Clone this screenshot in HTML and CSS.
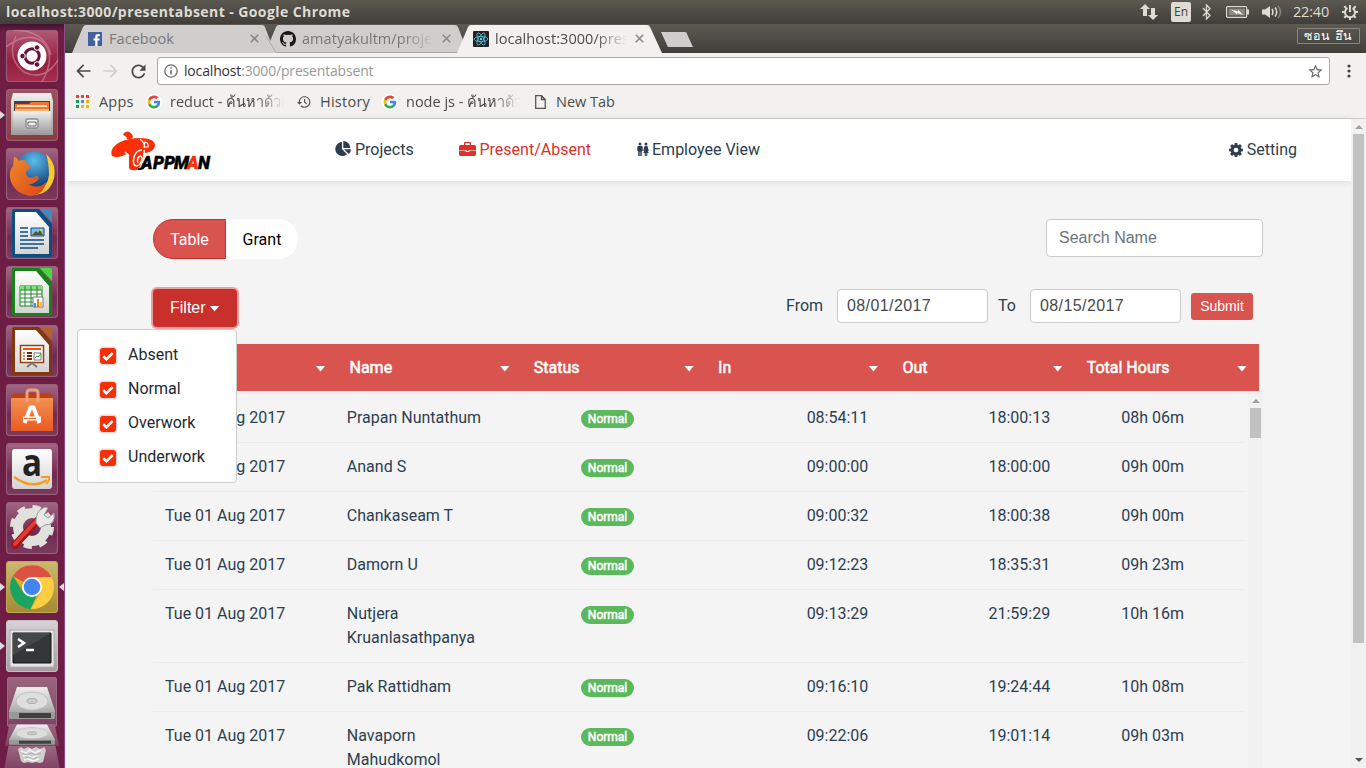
FILE: index.html
```html
<!DOCTYPE html>
<html lang="en">
<head>
<meta charset="utf-8">
<title>localhost:3000/presentabsent</title>
<link rel="stylesheet" href="styles.css">
</head>
<body>
<svg width="0" height="0" class="defs">
  <defs>
    <linearGradient id="steel" x1="0" y1="0" x2="0" y2="1"><stop offset="0" stop-color="#f0f0f0"/><stop offset="1" stop-color="#989898"/></linearGradient>
    <linearGradient id="paper" x1="0" y1="0" x2="0" y2="1"><stop offset="0" stop-color="#fff"/><stop offset="1" stop-color="#d4d4d4"/></linearGradient>
    <linearGradient id="bag" x1="0" y1="0" x2="0" y2="1"><stop offset="0" stop-color="#f39052"/><stop offset="1" stop-color="#ea5b20"/></linearGradient>
    <linearGradient id="fox" x1="0" y1="0" x2="1" y2="1"><stop offset="0" stop-color="#f08a2c"/><stop offset="1" stop-color="#dc4414"/></linearGradient>
    <radialGradient id="globe" cx=".5" cy=".25" r=".7"><stop offset="0" stop-color="#5ac0ea"/><stop offset="1" stop-color="#173f80"/></radialGradient>
    <symbol id="google" viewBox="0 0 24 24">
      <path fill="#4285f4" d="M22.56 12.25c0-.78-.07-1.53-.2-2.25H12v4.26h5.92c-.26 1.37-1.04 2.53-2.21 3.31v2.77h3.57c2.08-1.92 3.28-4.74 3.28-8.09z"/>
      <path fill="#34a853" d="M12 23c2.97 0 5.46-.98 7.28-2.66l-3.57-2.77c-.98.66-2.23 1.06-3.71 1.06-2.86 0-5.29-1.93-6.16-4.53H2.18v2.84C3.99 20.53 7.7 23 12 23z"/>
      <path fill="#fbbc05" d="M5.84 14.09c-.22-.66-.35-1.36-.35-2.09s.13-1.43.35-2.09V7.07H2.18C1.43 8.55 1 10.22 1 12s.43 3.45 1.18 4.93l2.85-2.22.81-.62z"/>
      <path fill="#ea4335" d="M12 5.38c1.62 0 3.06.56 4.21 1.64l3.15-3.15C17.45 2.09 14.97 1 12 1 7.7 1 3.99 3.47 2.18 7.07l3.66 2.84c.87-2.6 3.3-4.53 6.16-4.53z"/>
    </symbol>
    <symbol id="close" viewBox="0 0 9 9"><path d="M.8.8l7.4 7.4M8.2.8L.8 8.2" stroke="currentColor" stroke-width="1.6" fill="none"/></symbol>
    <symbol id="check" viewBox="0 0 12 10"><path d="M1.2 5.2l3.2 3L10.6 2" stroke="#fff" stroke-width="2.6" fill="none"/></symbol>
    <symbol id="drive" viewBox="0 0 46 34">
      <path d="M8 1h30l8 24v7q0 1-1 1H1q-1 0-1-1v-7z" fill="url(#steel)"/>
      <path d="M0 26h46v6q0 1-1 1H1q-1 0-1-1z" fill="#999"/><path d="M10 27h32v5H10z" fill="#3f3f3f"/>
      <ellipse cx="23" cy="15" rx="16" ry="9" fill="#dedede" stroke="#c0c0c0"/><ellipse cx="23" cy="15" rx="5" ry="2.5" fill="#ccc" stroke="#aaa"/>
    </symbol>
  </defs>
</svg>

<div class="desktop">
  <header class="panel">
    <div class="panel-title">localhost:3000/presentabsent - Google Chrome</div>
    <div class="indicators">
      <svg width="18" height="16" viewBox="0 0 18 16" fill="#dfdbd2"><path d="M5 0l5 5H7v7H3V5H0zM13 16l-5-5h3V4h4v7h3z"/></svg>
      <span class="lang">En</span>
      <svg class="bt" width="10" height="16" viewBox="0 0 10 16"><path d="M1 4l7 7.500-3.500 3.500V1L8 4.500 1 12" fill="none" stroke="#dfdbd2" stroke-width="1.300"/></svg>
      <svg class="battery" width="24" height="12" viewBox="0 0 24 12"><rect x=".6" y=".6" width="20" height="10.800" rx="1" fill="#4a4943" stroke="#dfdbd2" stroke-width="1.200"/><path d="M2.500 2.500h16.500v7H2.500z" fill="#8c897f"/><path d="M22 3.500v5" stroke="#dfdbd2" stroke-width="2"/><path d="M5 3.500l7 2 0-2 5 5.500-6-2v1.500z" fill="#f4f1ea"/></svg>
      <svg class="sound" width="20" height="16" viewBox="0 0 20 16"><path d="M0 5.500h3L8 2v12l-5-3.500H0z" fill="#dfdbd2"/><path d="M10 5q2 3 0 6M13 3.500q3.500 4.500 0 9" fill="none" stroke="#dfdbd2" stroke-width="1.500"/><path d="M16 2q5 6 0 12" fill="none" stroke="#88857c" stroke-width="1.500"/></svg>
      <span class="clock">22:40</span>
      <svg class="power" width="16" height="16" viewBox="0 0 16 16" fill="none" stroke="#dfdbd2"><path d="M5.500 4a5 5 0 1 0 5 0" stroke-width="2"/><path d="M8 1v7" stroke-width="2"/><path d="M0 8h3M13 8h3M2.300 2.300l2 2M13.700 2.300l-2 2M2.300 13.700l2-2M13.700 13.700l-2-2M8 13v3" stroke-width="2"/></svg>
    </div>
  </header>

  <div class="workspace">
    <nav class="launcher">
      <div class="tile dash"><svg viewBox="0 0 52 52"><path d="M0 17Q22 0 38 13 50 27 36 52M52 30Q38 52 18 42 0 28 10 6M8 0Q38 0 45 25" fill="none" stroke="#df93a6" stroke-opacity=".55" stroke-width="1.500"/><circle cx="26" cy="26" r="14.500" fill="#fff"/><circle cx="26" cy="26" r="7.200" fill="none" stroke="#6b1234" stroke-width="3"/><g fill="#6b1234" stroke="#fff"><circle cx="16.500" cy="26" r="2.800"/><circle cx="31" cy="17.500" r="2.800"/><circle cx="31" cy="34.500" r="2.800"/></g></svg></div>
      <div class="tile files running"><svg viewBox="0 0 52 52"><path d="M7 4h38l2 8v34H5V12z" fill="url(#steel)"/><path d="M8 12h36v11H8z" fill="#444"/><path d="M9 15h14l2-2h18v9H9z" fill="#ef762c"/><path d="M11 17h30" stroke="#fff" stroke-width="1.500"/><path d="M9 21h34" stroke="#f8b36f" stroke-width="2"/><path d="M7 22h38v24H7z" fill="url(#steel)"/><rect x="20" y="30" width="12" height="9" rx="2" fill="#f2f2f2" stroke="#8f8f8f" stroke-width="1.500"/><path d="M22 33h8v4h-8z" fill="#eee" stroke="#666"/></svg></div>
      <div class="tile"><svg viewBox="0 0 52 52"><circle cx="28" cy="22" r="18.500" fill="url(#globe)"/><path d="M40 6q11 10 8 24-4 16-20 17 14-8 15-20 0-12-3-21z" fill="#f7c92f"/><path d="M8 9q3 0 5 4 4-2 7 0 0 4 5 4-2 5-5 6-1 3 2 6 5 2 8-1 4 0 2 4-5 5-10 4 10 6 18-2-3 14-16 14Q7 45 4 30q-1-7 3-12z" fill="url(#fox)"/></svg></div>
      <div class="tile"><svg viewBox="0 0 52 52"><path d="M8 2h25l13 15v31q0 2-2 2H8q-2 0-2-2V4q0-2 2-2z" fill="#0b4f82"/><path d="M34 2h10q2 0 2 2v11z" fill="#3d8dbc"/><path d="M9 5h21l13 15v27H9z" fill="url(#paper)"/><path d="M14 21h8M14 25h8M14 29h8M14 33h24M14 37h24M14 41h18" stroke="#0b4f82" stroke-width="1.700"/><path d="M25 21h13v8H25z" fill="#83bedb" stroke="#0b4f82"/><path d="M26 28l4-4 2 2 2-3 3 5z" fill="#4c5440"/><circle cx="35" cy="23" r="1" fill="#fff200"/></svg></div>
      <div class="tile"><svg viewBox="0 0 52 52"><path d="M8 2h25l13 15v31q0 2-2 2H8q-2 0-2-2V4q0-2 2-2z" fill="#158317"/><path d="M34 2h10q2 0 2 2v11z" fill="#4bd642"/><path d="M9 5h21l13 15v27H9z" fill="url(#paper)"/><path d="M14 20h22v20H14z" fill="#fff" stroke="#158317"/><path d="M14 20h22v4H14z" fill="#84df7d"/><path d="M14 24h22M14 28h22M14 32h22M14 36h22M19 20v20M25 20v20M31 20v20" stroke="#218825"/><path d="M27 31h10v10H27z" fill="#fff" stroke="#777"/><path d="M29 37v4" stroke="#20a4da" stroke-width="2"/><path d="M32 33v8" stroke="#ed7625" stroke-width="2"/><path d="M35 36v5" stroke="#f2c532" stroke-width="2"/></svg></div>
      <div class="tile"><svg viewBox="0 0 52 52"><path d="M8 2h25l13 15v31q0 2-2 2H8q-2 0-2-2V4q0-2 2-2z" fill="#84370c"/><path d="M34 2h10q2 0 2 2v11z" fill="#b76225"/><path d="M9 5h21l13 15v27H9z" fill="url(#paper)"/><path d="M14.500 20.500h23v17h-23z" fill="#fffaf4" stroke="#984011" stroke-width="1.500"/><path d="M17 24h18" stroke="#d85c25" stroke-width="2"/><path d="M17 28h2M17 31h2M17 34h2" stroke="#e78662" stroke-width="2"/><path d="M21 28h5M21 31h5M21 34h5" stroke="#662b12" stroke-width="2"/><path d="M28 28h7v7h-7z" fill="#fff" stroke="#777"/><path d="M29 33l2-2 1 1 3-3" fill="none" stroke="#279e37"/><path d="M26 38l-5 4M26 38l5 4" stroke="#777" stroke-width="2"/></svg></div>
      <div class="tile"><svg viewBox="0 0 52 52"><path d="M5 11l3-2h36l3 2v5H5z" fill="#b94316"/><path d="M5 14h42v33H5z" fill="url(#bag)"/><path d="M21 18V9q0-3 3-3h5q3 0 3 3v9" fill="none" stroke="#f0a179" stroke-width="3"/><path d="M18.500 39L24.500 23.500h3L33.500 39M17 34.500h18" fill="none" stroke="#fff" stroke-width="4"/><path d="M18 34.500h12" stroke="#ed6c32"/></svg></div>
      <div class="tile"><svg viewBox="0 0 52 52"><rect x="6" y="6" width="40" height="40" rx="3" fill="url(#paper)"/><text x="16" y="33" class="a-mark" textLength="20" lengthAdjust="spacingAndGlyphs">a</text><path d="M8 34q18 13 33 3" fill="none" stroke="#f49b20" stroke-width="2.500"/><path d="M35 34h8q1 4-3 7" fill="none" stroke="#f49b20" stroke-width="1.800"/></svg></div>
      <div class="tile"><svg viewBox="0 0 52 52"><circle cx="26" cy="25" r="14" fill="none" stroke="#e0e0dd" stroke-width="10"/><circle cx="26" cy="25" r="19.500" fill="none" stroke="#e0e0dd" stroke-width="5" stroke-dasharray="8 7.300"/><path d="M9 43L32 18" stroke="#a71313" stroke-width="7.500" stroke-linecap="round"/><path d="M9 42L31 18" stroke="#df3d36" stroke-width="4" stroke-linecap="round"/><path d="M30 21q-1-12 9-16l3 1-4 7 4 3 6-5q2 12-9 12l-5 3z" fill="#e8e8e8" stroke="#999"/></svg></div>
      <div class="tile chrome running focused"><svg viewBox="0 0 52 52"><circle cx="26" cy="26" r="22" fill="#e5ae1d"/><path d="M26 26L7 15a22 22 0 0 1 38.500 1z" fill="#dd5144"/><path d="M26 16h19.500A22 22 0 0 1 25 48l10-17z" fill="#ffcd41"/><path d="M7 15l11 17 13 2-6.500 14A22 22 0 0 1 7 15z" fill="#1da361"/><circle cx="26" cy="26" r="10" fill="#fff"/><circle cx="26" cy="26" r="8.300" fill="#4285ef"/></svg></div>
      <div class="tile term running"><svg viewBox="0 0 52 52"><path d="M4 10h44v37H4z" fill="#e6e6e6" stroke="#aaa"/><path d="M7 13h38v30H7z" fill="#343737" stroke="#151515"/><path d="M7 13h38L7 35z" fill="#454848"/><path d="M12 19l6 4-6 4M20 30h8" fill="none" stroke="#fff" stroke-width="2.500"/></svg></div>
      <div class="stack">
        <div class="fold f1"><svg><use href="#drive"/></svg></div>
        <div class="fold f2"><svg preserveAspectRatio="none" viewBox="0 0 46 34"><use href="#drive" width="46" height="34"/></svg></div>
        <div class="fold f3"><svg viewBox="0 0 30 18"><path d="M1 3l3-2 3 2 4-2 4 2 4-2 4 2 4-2 2 3-3 12 -3 1-4-1-4 1-4-1-4 1-3-2z" fill="#cfcfcd"/><path d="M4 5l5 2 4-3 5 3 6-3M6 10l5-1 4 3 6-3M7 14l4-1 5 2 6-2" fill="none" stroke="#f4f4f4" stroke-width="1.500"/><path d="M5 7l5 2 5-2 4 2 5-2M8 12l4-1 4 2 4-2" fill="none" stroke="#a5a5a3" stroke-width=".8"/></svg></div>
      </div>
    </nav>

    <main class="browser">
      <div class="tabstrip">
        <svg class="tab-shapes" width="640" height="29" viewBox="0 0 640 29">
          <path d="M7 29L18 3q1-2 3-2h176q2 0 3 2l10 26z" fill="#d0cecc"/>
          <path d="M200 29L211 3q1-2 3-2h176q2 0 3 2l10 26z" fill="#d0cecc"/>
          <path d="M201 12l10 16.500H393" fill="none" stroke="#aaa8a5"/>
          <path d="M392 29L403 3q1-2 3-2h176q2 0 3 2l12 26z" fill="#f2f1f0"/>
          <path d="M596 8h24q2 0 2 2l6 13h-24q-2 0-2-2z" fill="#d0cecc"/>
        </svg>
        <div class="tab t1"><svg width="14" height="14" viewBox="0 0 14 14"><path d="M0 0h14v14H0z" fill="#4460a0"/><path d="M9.500 14V8.600h1.900l.3-2.100H9.500V5.200c0-.7.2-1 1.100-1h1.200V2.200c-2.900-.5-4.600.3-4.600 2.700v1.600H5.500v2.100h1.700V14z" fill="#fff"/></svg><span class="tab-label fb">Facebook</span><svg class="x" width="9" height="9"><use href="#close"/></svg></div>
        <div class="tab t2"><svg width="16" height="16" viewBox="0 0 16 16"><path fill="#191717" d="M8 0C3.580 0 0 3.580 0 8c0 3.540 2.290 6.530 5.470 7.590.4.070.55-.17.55-.38 0-.19-.01-.82-.01-1.490-2.010.37-2.530-.49-2.690-.94-.09-.23-.48-.94-.82-1.130-.28-.15-.68-.52-.01-.53.63-.01 1.080.58 1.230.82.72 1.210 1.870.87 2.330.66.07-.52.28-.87.51-1.070-1.780-.2-3.640-.89-3.640-3.950 0-.87.31-1.590.82-2.150-.08-.2-.36-1.020.08-2.120 0 0 .67-.21 2.200.82.64-.18 1.320-.27 2-.27s1.360.09 2 .27c1.530-1.040 2.200-.82 2.200-.82.44 1.100.16 1.920.08 2.120.51.56.82 1.270.82 2.150 0 3.070-1.870 3.750-3.650 3.950.29.25.54.73.54 1.480 0 1.070-.01 1.930-.01 2.200 0 .21.15.46.55.38A8.010 8.010 0 0016 8c0-4.420-3.580-8-8-8z"/></svg><span class="tab-label fade">amatyakultm/project</span><svg class="x" width="9" height="9"><use href="#close"/></svg></div>
        <div class="tab t3"><svg width="16" height="16" viewBox="0 0 16 16"><rect width="16" height="16" rx="1" fill="#222"/><g fill="none" stroke="#61dafb" stroke-width=".7"><ellipse cx="8" cy="8" rx="6.800" ry="2.600"/><ellipse cx="8" cy="8" rx="6.800" ry="2.600" transform="rotate(60 8 8)"/><ellipse cx="8" cy="8" rx="6.800" ry="2.600" transform="rotate(120 8 8)"/></g><circle cx="8" cy="8" r="1.200" fill="#61dafb"/></svg><span class="tab-label fade">localhost:3000/present</span><svg class="x" width="9" height="9"><use href="#close"/></svg></div>
        <div class="profile">ซอน ฮึน</div>
      </div>

      <div class="toolbar">
        <svg class="nav-i" width="20" height="20" viewBox="0 0 24 24" fill="#4a4a4a"><path d="M21 11H7.830l5.590-5.590L12 4l-8 8 8 8 1.410-1.410L7.830 13H21z"/></svg>
        <svg class="nav-i fwd" width="20" height="20" viewBox="0 0 24 24" fill="#d0d0cf"><path d="M3 11h13.170l-5.590-5.590L12 4l8 8-8 8-1.410-1.410L16.170 13H3z"/></svg>
        <svg class="nav-i" width="21" height="21" viewBox="0 0 24 24" fill="#4a4a4a"><path d="M17.650 6.350C16.200 4.900 14.210 4 12 4c-4.420 0-7.990 3.580-7.990 8s3.570 8 7.990 8c3.730 0 6.840-2.550 7.730-6h-2.080c-.82 2.330-3.040 4-5.650 4-3.310 0-6-2.690-6-6s2.690-6 6-6c1.660 0 3.140.69 4.220 1.780L13 11h7V4z"/></svg>
        <div class="omnibox">
          <svg width="14" height="14" viewBox="0 0 14 14"><circle cx="7" cy="7" r="6.200" fill="none" stroke="#6c6c6c" stroke-width="1.300"/><path d="M7 6v4.500M7 3.200v1.600" stroke="#6c6c6c" stroke-width="1.600"/></svg>
          <span class="url"><b>localhost</b>:3000/presentabsent</span>
          <svg class="star" width="17" height="17" viewBox="0 0 24 24" fill="#666"><path d="M22 9.240l-7.190-.62L12 2 9.190 8.630 2 9.240l5.460 4.730L5.820 21 12 17.270 18.180 21l-1.630-7.030zM12 15.400l-3.760 2.270 1-4.280-3.320-2.880 4.380-.38L12 6.100l1.710 4.040 4.380.38-3.320 2.880 1 4.280z"/></svg>
        </div>
        <svg class="menu" width="4" height="14" viewBox="0 0 4 14" fill="#444"><circle cx="2" cy="2" r="1.600"/><circle cx="2" cy="7" r="1.600"/><circle cx="2" cy="12" r="1.600"/></svg>
      </div>

      <div class="bookmarks">
        <div class="bm b1"><svg width="13" height="13" viewBox="0 0 13 13"><path d="M0 0h3v3H0zM5 0h3v3H5zM10 0h3v3h-3z" fill="#ea4335"/><path d="M0 5h3v3H0z" fill="#0f9d58"/><path d="M5 5h3v3H5z" fill="#4285f4"/><path d="M10 5h3v3h-3zM5 10h3v3H5zM10 10h3v3h-3z" fill="#f4b400"/><path d="M0 10h3v3H0z" fill="#0f9d58"/></svg><span class="s-apps">Apps</span></div>
        <div class="bm b2"><i class="g"><svg width="14" height="14"><use href="#google"/></svg></i><span class="s-reduct fade">reduct - ค้นหาด้วย</span></div>
        <div class="bm b3"><svg width="14" height="14" viewBox="0 0 24 24" fill="#555"><path d="M13 2C7.500 2 3 6.500 3 12H0l4 4.500L9 12H5c0-4.400 3.600-8 8-8s8 3.600 8 8-3.600 8-8 8c-2.200 0-4.200-.9-5.700-2.300L6 19.200C7.800 21 10.300 22 13 22c5.500 0 10-4.500 10-10S18.500 2 13 2zm-1 5v6l4.500 2.700.9-1.500L14 12.100V7z"/></svg><span class="s-history">History</span></div>
        <div class="bm b4"><i class="g"><svg width="14" height="14"><use href="#google"/></svg></i><span class="s-node fade">node js - ค้นหาด้วย</span></div>
        <div class="bm b5"><svg width="11" height="14" viewBox="0 0 11 14"><path d="M.7.700h5.800l3.800 3.800v8.800H.7zM6.500.700v3.800h3.800" fill="none" stroke="#555" stroke-width="1.300"/></svg><span class="s-new">New Tab</span></div>
      </div>

      <div class="viewport">
        <div class="page">
          <header class="site">
            <svg class="logo" width="102" height="40" viewBox="0 0 102 40">
              <g fill="#fb2f06"><path d="M12 4q1-3.500 5-3.500 4 1 5 5.500l-2 2h-4q0-2.500-4-4z"/><path d="M1 25Q-2 17 9 11q9-4 20-4 14 0 15 7 0 6-9 8l-3 0 0 4-4 12q-3 2-7 1-3 0-3-3l0-10-1-4q-9 6-16 3z"/></g>
              <path d="M29 8q6 5 4 9M34 11q4 1 3 5h-4z" fill="none" stroke="#fff" stroke-width="1.200"/>
              <path d="M18 25l-4-4" stroke="#fff" stroke-width="1.200"/>
              <path d="M31 19q-6 0-8 7-2 9 3 9 4-1 5-8-1-4-4 0-1 3 0 5M33 19q2 7-4 19" fill="none" stroke="#fff" stroke-width="1.400"/>
              <path d="M27 38q4 1 8-4" fill="none" stroke="#000" stroke-width="1.800"/>
              <text y="37.500" class="logo-text"><tspan x="30">A</tspan><tspan x="42">P</tspan><tspan x="53">P</tspan><tspan x="63" textLength="15" lengthAdjust="spacingAndGlyphs">M</tspan><tspan x="76" class="logo-red">A</tspan><tspan x="87">N</tspan></text>
            </svg>
            <a class="link projects"><svg width="17" height="16" viewBox="0 0 17 16" fill="currentColor"><path d="M7 1v7l5 5.200A7 7 0 1 1 7 1z"/><path d="M8.300 0A7 7 0 0 1 15.300 7H8.300zM9 8.300h7a7 7 0 0 1-2.200 4.700z"/></svg>Projects</a>
            <a class="link present"><svg width="17" height="15" viewBox="0 0 17 15" fill="currentColor"><path d="M5 3V1q0-1 1-1h5q1 0 1 1v2h3.500Q17 3 17 4.500V8H0V4.500Q0 3 1.500 3zm1.300 0h4.400V1.300H6.300zM0 8.500h6.500v1.500h4V8.500H17v4q0 1.500-1.500 1.500h-14Q0 14 0 12.500zM7.500 8h2v1h-2z"/></svg>Present/Absent</a>
            <a class="link employee"><svg width="12" height="15" viewBox="0 0 12 15" fill="currentColor"><circle cx="3" cy="2" r="1.500"/><circle cx="9" cy="2" r="1.500"/><path d="M1 4h4l.7.700V9H4.800v5H3.300v-4h-.6v4H1.200V9H.3V4.700zM7.500 4h3l1.300 5h-1l1 2H10.300v3H9.200v-3h-.4v3H7.700v-3H6.200l1-2h-1z"/></svg>Employee View</a>
            <a class="link setting"><svg width="14" height="14" viewBox="128 128 1536 1536" fill="currentColor"><path d="M1152 896q0-106-75-181t-181-75-181 75-75 181 75 181 181 75 181-75 75-181zm512-109v222q0 12-8 23t-20 13l-185 28q-19 54-39 91 35 50 107 138 10 12 10 25t-9 23q-27 37-99 108t-94 71q-12 0-26-9l-138-108q-44 23-91 38-16 136-29 186-7 28-36 28h-222q-14 0-24.500-8.500t-11.500-21.500l-28-184q-49-16-90-37l-141 107q-10 9-25 9-14 0-25-11-126-114-165-168-7-10-7-23 0-12 8-23 15-21 51-66.500t54-70.500q-27-50-41-99l-183-27q-13-2-21-12.500t-8-23.500v-222q0-12 8-23t19-13l186-28q14-46 39-92-40-57-107-138-10-12-10-24 0-10 9-23 26-36 98.500-107.500t94.500-71.500q13 0 26 10l138 107q44-23 91-38 16-136 29-186 7-28 36-28h222q14 0 24.500 8.500t11.500 21.500l28 184q49 16 90 37l142-107q9-9 24-9 13 0 25 10 129 119 165 170 7 8 7 22 0 12-8 23-15 21-51 66.500t-54 70.500q26 50 41 98l183 28q13 2 21 12.500t8 23.500z"/></svg>Setting</a>
          </header>

          <section class="content">
            <div class="row-top">
              <div class="toggle"><button class="on">Table</button><button>Grant</button></div>
              <div class="search">Search Name</div>
            </div>
            <div class="row-filter">
              <div class="dropdown">
                <button class="filter">Filter<i class="caret"></i></button>
                <div class="options">
                  <label><i class="box"><svg width="12" height="10"><use href="#check"/></svg></i>Absent</label>
                  <label><i class="box"><svg width="12" height="10"><use href="#check"/></svg></i>Normal</label>
                  <label><i class="box"><svg width="12" height="10"><use href="#check"/></svg></i>Overwork</label>
                  <label><i class="box"><svg width="12" height="10"><use href="#check"/></svg></i>Underwork</label>
                </div>
              </div>
              <div class="range">
                <span class="from">From</span><div class="date">08/01/2017</div>
                <span class="to">To</span><div class="date">08/15/2017</div>
                <button class="submit">Submit</button>
              </div>
            </div>
            <div class="thead">
              <div><span>Date</span><i class="caret"></i></div><div><span>Name</span><i class="caret"></i></div><div><span>Status</span><i class="caret"></i></div><div><span>In</span><i class="caret"></i></div><div><span>Out</span><i class="caret"></i></div><div><span>Total Hours</span><i class="caret"></i></div>
            </div>
            <div class="tbody">
              <div class="rows">
                <div class="tr"><span>Tue 01 Aug 2017</span><span>Prapan Nuntathum</span><span class="c"><b class="badge">Normal</b></span><span class="r">08:54:11</span><span class="r">18:00:13</span><span class="h">08h 06m</span></div>
                <div class="tr"><span>Tue 01 Aug 2017</span><span>Anand S</span><span class="c"><b class="badge">Normal</b></span><span class="r">09:00:00</span><span class="r">18:00:00</span><span class="h">09h 00m</span></div>
                <div class="tr"><span>Tue 01 Aug 2017</span><span>Chankaseam T</span><span class="c"><b class="badge">Normal</b></span><span class="r">09:00:32</span><span class="r">18:00:38</span><span class="h">09h 00m</span></div>
                <div class="tr"><span>Tue 01 Aug 2017</span><span>Damorn U</span><span class="c"><b class="badge">Normal</b></span><span class="r">09:12:23</span><span class="r">18:35:31</span><span class="h">09h 23m</span></div>
                <div class="tr"><span>Tue 01 Aug 2017</span><span>Nutjera Kruanlasathpanya</span><span class="c"><b class="badge">Normal</b></span><span class="r">09:13:29</span><span class="r">21:59:29</span><span class="h">10h 16m</span></div>
                <div class="tr"><span>Tue 01 Aug 2017</span><span>Pak Rattidham</span><span class="c"><b class="badge">Normal</b></span><span class="r">09:16:10</span><span class="r">19:24:44</span><span class="h">10h 08m</span></div>
                <div class="tr"><span>Tue 01 Aug 2017</span><span>Navaporn Mahudkomol</span><span class="c"><b class="badge">Normal</b></span><span class="r">09:22:06</span><span class="r">19:01:14</span><span class="h">09h 03m</span></div>
              </div>
              <div class="scroll inner"><i class="up"></i><i class="thumb"></i></div>
            </div>
          </section>
        </div>
        <div class="scroll outer"><i class="up"></i><i class="thumb"></i><i class="down"></i></div>
      </div>
    </main>
  </div>
</div>
</body>
</html>
```
FILE: styles.css
```css
* { box-sizing: border-box; }
body { margin: 0; overflow: hidden; font-family: Roboto, sans-serif; font-size: 16px; }
button { font: inherit; border: 0; margin: 0; padding: 0; }
svg { display: block; flex: none; }
.defs { position: absolute; }
.desktop { width: 1366px; height: 768px; display: flex; flex-direction: column; overflow: hidden; }

.panel { height: 24px; flex: none; display: flex; justify-content: space-between; align-items: center; padding: 0 8px 0 6px; background: linear-gradient(#5b5950, #3f3e3a); color: #dfdbd2; font-family: "Open Sans", sans-serif; }
.panel-title { font-size: 14px; font-weight: 700; letter-spacing: .42px; white-space: nowrap; margin-top: -1px; }
.indicators { display: flex; align-items: center; }
.lang { width: 20px; height: 20px; margin-left: 13px; border-radius: 2px; background: #dfdbd2; color: #45433d; font-size: 12px; line-height: 20px; text-align: center; }
.bt { margin-left: 11px; }
.battery { margin-left: 14px; }
.sound { margin-left: 12px; }
.clock { width: 37px; margin-left: 11px; font-size: 14.500px; letter-spacing: -.2px; white-space: nowrap; margin-top: -1px; }
.power { margin-left: 12px; }

.workspace { flex: 1; display: flex; min-height: 0; }
.launcher { width: 65px; flex: none; display: flex; flex-direction: column; gap: 7px; padding: 6px 0 0 6px; background: linear-gradient(#43132d, #6e1d45 8px); border-right: 1px solid #8d4e86; overflow: hidden; }
.tile { position: relative; width: 52px; height: 52px; flex: none; border-radius: 4px; background: linear-gradient(#a36684, #712a50 60%, #7c3a5e); box-shadow: inset 0 0 0 1px #98627e; }
.tile svg { width: 52px; height: 52px; }
.dash { background: linear-gradient(#b15a75, #94203f 60%, #a42f50); }
.files { background: linear-gradient(#9e5160, #8a3d3f); }
.chrome { background: linear-gradient(#cdb970, #a58a31); box-shadow: inset 0 0 0 1px #c1a75b; }
.term { background: linear-gradient(#d8d3d6, #a39ba1); box-shadow: inset 0 0 0 1px #c4bdc1; }
.running::before, .focused::after { content: ""; position: absolute; top: 22px; border: 4px solid transparent; }
.running::before { left: -6px; border-left: 5px solid #ddd; border-right: 0; }
.focused::after { right: -6px; border-right: 5px solid #ddd; border-left: 0; }
.stack { display: flex; flex-direction: column; align-items: center; width: 52px; margin-top: -2px; }
.fold { flex: none; display: flex; justify-content: center; background: linear-gradient(#9b6680, #7d4260); }
.f1 { width: 50px; height: 50px; border-radius: 3px; padding-top: 9px; box-shadow: inset 0 0 0 1px #9c6984; }
.f1 svg { width: 46px; height: 34px; }
.f2 { width: 54px; height: 22px; clip-path: polygon(8% 0, 92% 0, 100% 100%, 0 100%); margin-top: -3px; }
.f2 svg { width: 46px; height: 21px; }
.f3 { width: 56px; height: 24px; clip-path: polygon(8% 0, 92% 0, 100% 100%, 0 100%); }
.f3 svg { width: 30px; height: 18px; }
.a-mark { font: bold 37px "Open Sans", sans-serif; fill: #222; }

.browser { flex: 1; min-width: 0; display: flex; flex-direction: column; background: #f2f1f0; font-family: "Open Sans", sans-serif; color: #4c4c4c; font-size: 14px; }
.tabstrip { height: 29px; flex: none; position: relative; display: flex; align-items: center; background: linear-gradient(#5c5a51, #3f3e39); }
.tab-shapes { position: absolute; left: 0; top: 0; }
.tab { position: relative; display: flex; align-items: center; color: #777; }
.t1 { margin-left: 23px; width: 192px; }
.t2 { width: 193px; }
.t3 { width: 180px; color: #4c4c4c; }
.tab-label { width: 132px; margin-left: 6px; overflow: hidden; white-space: nowrap; letter-spacing: .05px; font-size: 14.5px; }
.tab-label.fb { width: 133px; margin-left: 7px; }
.tab .x { margin-left: 8px; color: #8c8a88; }
.fade { -webkit-mask-image: linear-gradient(90deg, #000 76%, transparent); mask-image: linear-gradient(90deg, #000 76%, transparent); }
.profile { margin-left: auto; margin-right: 6px; width: 63px; height: 16px; margin-top: -6px; border: 1px solid #89877f; border-radius: 1px; color: #fff; font-size: 12.5px; letter-spacing: .5px; line-height: 14px; text-align: center; }
.toolbar { height: 36px; flex: none; display: flex; align-items: center; padding: 0 15px 0 8px; }
.nav-i { margin-right: 8px; }
.fwd { margin-right: 7px; }
.omnibox { flex: 1; height: 28px; margin-right: 17px; border: 1px solid #a9a8a6; border-radius: 3px; background: #fff; display: flex; align-items: center; padding: 0 5px 0 6px; }
.url { margin-left: 6px; margin-top: -1px; font-size: 14px; color: #989898; letter-spacing: -.17px; }
.url b { font-weight: 400; color: #333; }
.star { margin-left: auto; }
.bookmarks { height: 30px; flex: none; display: flex; align-items: center; padding: 0 0 4px 11px; border-bottom: 1px solid #cfcdca; font-size: 14.5px; white-space: nowrap; }
.bm { display: flex; align-items: center; }
.g { width: 16px; height: 16px; border-radius: 8px; background: #fff; display: grid; place-items: center; }
.b1 { width: 70px; } .b2 { width: 151px; } .b3 { width: 85px; } .b4 { width: 153px; }
.bm span { margin-left: 8px; overflow: hidden; }
.bm .s-apps { margin-left: 10px; letter-spacing: .2px; }
.bm .s-history { margin-left: 9px; letter-spacing: .25px; }
.bm .s-reduct, .bm .s-node { width: 114px; }
.bm .s-new { margin-left: 10px; }

.viewport { flex: 1; display: flex; min-height: 0; }
.page { flex: 1; min-width: 0; display: flex; flex-direction: column; background: #f4f4f4; font-family: Roboto, sans-serif; font-size: 16px; line-height: 24px; color: #2c3e50; }
.site { height: 62px; flex: none; display: flex; align-items: center; padding-left: 46px; background: #fff; box-shadow: 0 1px 8px rgba(0,0,0,.1); }
.logo { margin-top: 1px; width: 102px; }
.logo-text { font: italic 900 17.5px Roboto, sans-serif; fill: #000; stroke: #000; stroke-width: .4; }
.logo-red { fill: #fb2f06; stroke: #fb2f06; }
.link { display: flex; align-items: center; gap: 3px; white-space: nowrap; }
.link svg { margin-top: -2px; }
.projects { margin-left: 122px; width: 124px; }
.present { gap: 3.5px; width: 178px; color: #d9332e; }
.setting { gap: 4px; margin-left: auto; margin-right: 54px; }
.setting svg { margin-top: 0; }
.content { width: 1111px; margin-left: 87px; padding-top: 38px; flex: 1; min-height: 0; display: flex; flex-direction: column; }
.row-top { height: 40px; flex: none; display: flex; justify-content: space-between; margin-left: 1px; }
.toggle { display: flex; height: 40px; }
.toggle button { width: 72px; padding-top: 1px; background: #fff; color: #000; border-radius: 0 20px 20px 0; }
.toggle .on { width: 73px; background: #d9534f; color: #fff; border: 1px solid #c9302c; border-radius: 20px 0 0 20px; }
.search { width: 217px; height: 38px; border: 1px solid #ccc; border-radius: 4px; background: #fff; padding: 6px 12px; color: #6c757d; font-family: "Liberation Sans", sans-serif; }
.row-filter { flex: none; height: 55px; margin: 30px 10px 0 1px; display: flex; justify-content: space-between; }
.dropdown { position: relative; }
.filter { display: flex; align-items: center; width: 84px; height: 38px; padding-left: 17px; border-radius: 4px; background: #c9302c; box-shadow: 0 0 0 2px #e6a09e; color: #fff; font-family: "Liberation Sans", sans-serif; }
.caret { width: 10px; height: 6px; flex: none; margin-top: 2px; background: #fff; clip-path: polygon(0 0, 100% 0, 50% 100%); }
.filter .caret { margin-left: 4px; margin-top: 1px; }
.options { position: absolute; z-index: 2; left: -76px; top: 40px; width: 160px; height: 154px; padding: 8px 0 0 22px; background: #fff; border: 1px solid #ccc; border-radius: 4px; color: #24292e; }
.options label { height: 34px; display: flex; align-items: center; }
.box { width: 16px; height: 16px; margin: 2px 12px 0 0; border-radius: 3px; background: #fb2d05; box-shadow: 0 0 0 1.5px #ddd; display: grid; place-items: center; }
.range { display: flex; height: 34px; align-items: center; white-space: nowrap; }
.from { width: 51px; }
.to { width: 32px; margin-left: 10px; }
.date { width: 151px; height: 34px; padding: 4px 9px; border: 1px solid #ccc; border-radius: 4px; background: #fff; color: #464a4c; font-family: "Liberation Sans", sans-serif; letter-spacing: .4px; }
.submit { width: 62px; height: 27px; margin-left: 10px; border-radius: 3px; background: #d9534f; color: #fff; font: 14px "Liberation Sans", sans-serif; }
.thead { width: 1107px; height: 47px; flex: none; display: grid; grid-template-columns: repeat(6, 184.3px); background: #d9534f; color: #fff; -webkit-text-stroke: .55px #fff; }
.thead div { display: flex; align-items: center; justify-content: space-between; padding: 0 10.8px 0 13.2px; }
.tbody { flex: 1; min-height: 0; display: flex; border-top: 3px solid #eee; overflow: hidden; }
.rows { width: 1091px; margin-left: 1px; }
.tr { display: grid; grid-template-columns: repeat(6, 1fr); border-bottom: 1px solid #eaebeb; padding: 12px 0; }
.tr span { padding: 0 12px; }
.tr .c { text-align: center; }
.tr .r { text-align: right; }
.tr .h { padding-left: 59px; }
.badge { display: inline-block; width: 53px; height: 18px; line-height: 18px; border-radius: 9px; background: #5cb85c; color: #fff; font-size: 12px; font-weight: 400; -webkit-text-stroke: .5px #fff; vertical-align: 0; }
.scroll { width: 15px; background: #f1f1f1; display: flex; flex-direction: column; align-items: center; }
.inner { margin-left: 4px; height: 400px; }
.up { border: 4px solid transparent; border-bottom-color: #a0a0a0; border-top: 0; margin: 6px 0 5px; }
.down { border: 4px solid transparent; border-top-color: #555; border-bottom: 0; margin: auto 0 6px; }
.thumb { width: 11px; background: #c1c1c1; }
.inner .up { margin: 5px 0; }
.inner .thumb { height: 30px; }
.outer .thumb { height: 509px; }
```
